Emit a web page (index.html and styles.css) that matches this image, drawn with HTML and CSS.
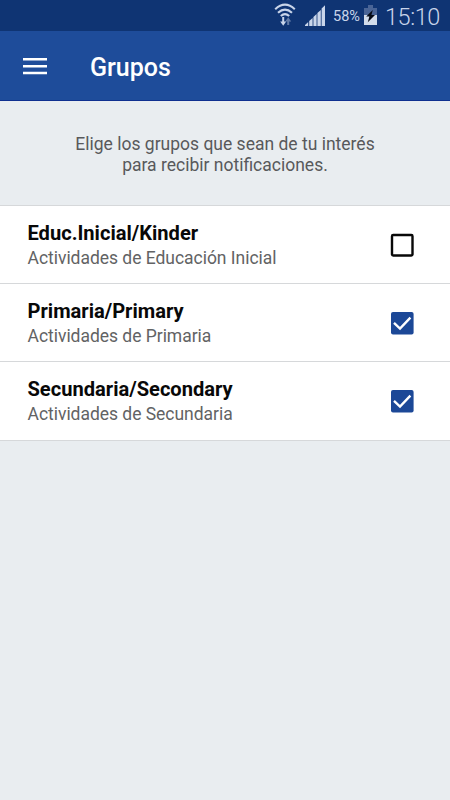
FILE: index.html
```html
<!DOCTYPE html>
<html lang="es">
<head>
<meta charset="utf-8">
<meta name="viewport" content="width=device-width, initial-scale=1">
<title>Grupos</title>
<link rel="stylesheet" href="styles.css">
</head>
<body>
<div class="status">
  <svg class="wifi" width="22" height="24" viewBox="0 0 22 24" fill="none" stroke="currentColor" stroke-width="2.1">
    <path d="M1.2 6.2Q11-2.8 20.8 6.2M4 9.7Q11 3.4 18 9.7M6.8 13Q11 9.2 15.2 13"/>
    <path d="M9.2 14v6" stroke-width="2"/><path d="M6.2 18.5h6l-3 4.3z" fill="currentColor" stroke="none"/>
    <g opacity=".45"><path d="M14.2 22v-5" stroke-width="2"/><path d="M11.2 18.5h6l-3-4.3z" fill="currentColor" stroke="none"/></g>
  </svg>
  <svg class="signal" width="20" height="21" viewBox="0 0 20 21" fill="currentColor">
    <path d="M0 21v-1L3.2 17v4zM4.2 21v-5l3.4-3v8zM8.4 21v-9l3.2-3v12zM12.4 21V8l3.4-3v16zM16.6 21V3.5L20 .3V21z"/>
  </svg>
  <span class="percent">58%</span>
  <svg class="battery" width="13" height="20" viewBox="0 0 13 20">
    <path d="M4 0h5v3h4v7H0V3h4z" fill="#496496"/><path d="M0 10h13v10H0z" fill="#d2dceb"/>
    <path d="M8.8 5 2.2 11.5h3.2L3.8 17.2 11 10H7.4z" fill="#050b16"/>
  </svg>
  <span class="clock">15:10</span>
</div>
<header class="appbar">
  <svg class="menu" width="24" height="17" viewBox="0 0 24 17" fill="#fff"><path d="M0 0h24v2.6H0zM0 7h24v2.6H0zM0 13.7h24v2.6H0z"/></svg>
  <h1>Grupos</h1>
</header>
<p class="intro">Elige los grupos que sean de tu interés<br>para recibir notificaciones.</p>
<main class="groups">
  <section class="group">
    <div><h2>Educ.Inicial/Kinder</h2><p>Actividades de Educación Inicial</p></div>
    <svg class="check" width="24" height="24" viewBox="0 0 24 24"><rect x="2" y="2" width="20.5" height="20.5" rx="1.2" fill="none" stroke="#080808" stroke-width="2.4"/></svg>
  </section>
  <section class="group">
    <div><h2>Primaria/Primary</h2><p>Actividades de Primaria</p></div>
    <svg class="check" width="24" height="24" viewBox="0 0 24 24"><rect x="1" y="1" width="22.6" height="22.6" rx="2" fill="#1c4897"/><path d="m4 11.8 6 5.7L20.4 6.6" fill="none" stroke="#fff" stroke-width="2.4"/></svg>
  </section>
  <section class="group">
    <div><h2>Secundaria/Secondary</h2><p>Actividades de Secundaria</p></div>
    <svg class="check" width="24" height="24" viewBox="0 0 24 24"><rect x="1" y="1" width="22.6" height="22.6" rx="2" fill="#1c4897"/><path d="m4 11.8 6 5.7L20.4 6.6" fill="none" stroke="#fff" stroke-width="2.4"/></svg>
  </section>
</main>
</body>
</html>
```

FILE: styles.css
```css
* { box-sizing: border-box; margin: 0; }
body {
  min-height: 800px;
  background: #e9edf0;
  font-family: Roboto, "Liberation Sans", sans-serif;
}
.status {
  display: flex;
  align-items: flex-start;
  height: 31px;
  padding-left: 274px;
  background: #0f3473;
  color: #c9d5ea;
  white-space: nowrap;
}
.wifi { margin-top: 3px; }
.signal { margin: 5px 0 0 9px; }
.percent { width: 31px; margin: 8px 0 0 8px; font-size: 14.5px; line-height: 18px; }
.battery { margin-top: 5px; }
.clock { margin: 3px 0 0 8px; font-size: 23.5px; font-weight: 300; line-height: 28px; letter-spacing: -0.45px; }
.appbar {
  display: flex;
  align-items: center;
  height: 70px;
  padding-left: 23px;
  background: #1e4c9a;
  border-bottom: 1px solid #0f3090;
  color: #fff;
}
.appbar h1 { margin: 4px 0 0 43px; font-size: 25px; font-weight: 500; line-height: 30px; }
.menu { margin-top: 1px; }
.intro {
  height: 104px;
  padding-top: 33px;
  color: #58595b;
  font-size: 17.5px;
  line-height: 20.5px;
  text-align: center;
}
.groups { border-top: 1px solid #d6d8da; }
.group {
  display: flex;
  justify-content: space-between;
  height: 78px;
  padding: 15px 36px 0 27.5px;
  background: #fff;
  border-bottom: 1px solid #d6d8da;
  white-space: nowrap;
}
.group:last-child { height: 79px; }
.group h2 { color: #080808; font-size: 20.1px; font-weight: 700; line-height: 24px; }
.group p { margin-top: 1px; color: #626364; font-size: 17.5px; line-height: 24px; letter-spacing: -0.03px; }
.check { margin: 11.7px 0 0; }
```
